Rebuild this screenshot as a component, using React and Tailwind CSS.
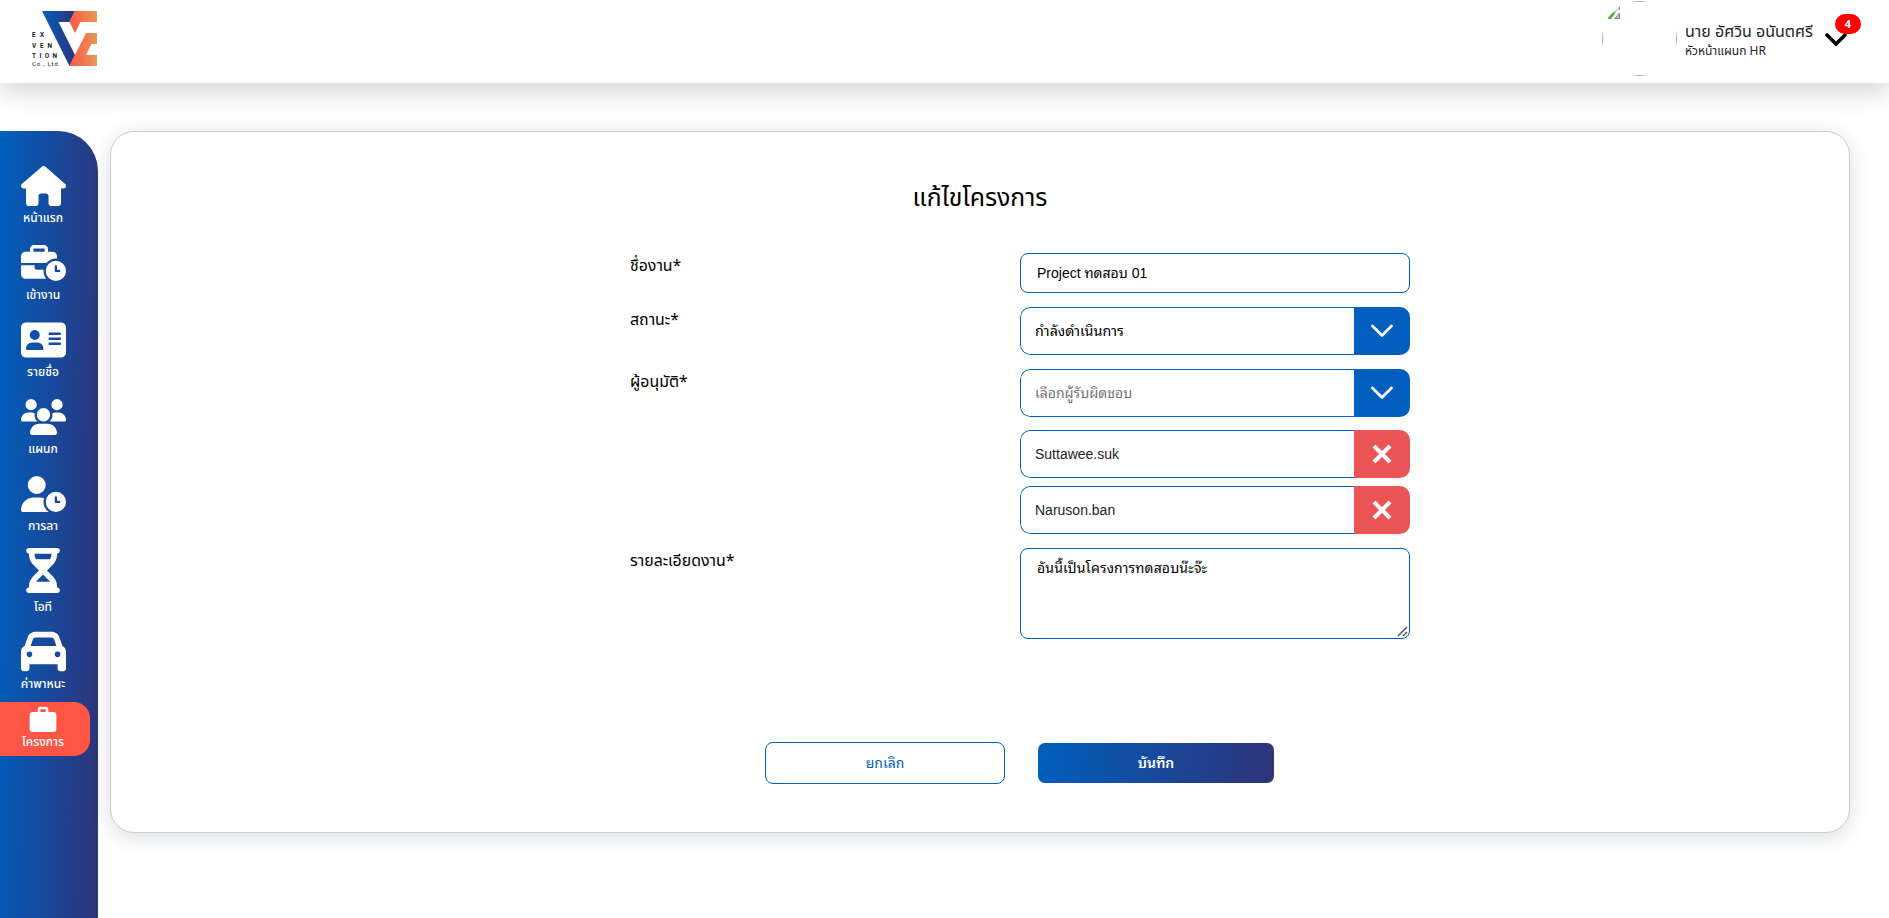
import React from "react";
import {
  FaHouse,
  FaBusinessTime,
  FaAddressCard,
  FaUsers,
  FaUserClock,
  FaHourglassHalf,
  FaCar,
} from "react-icons/fa6";
import { MdWork } from "react-icons/md";

const menu = [
  { label: "หน้าแรก", Icon: FaHouse, icon: "w-[45px] h-[40px]", item: "h-[77px]", gap: "mt-[2px]" },
  { label: "เข้างาน", Icon: FaBusinessTime, icon: "w-[45px] h-[36px]", item: "h-[77px]", gap: "mt-[2px]" },
  { label: "รายชื่อ", Icon: FaAddressCard, icon: "w-[45px] h-[40px]", item: "h-[77px]", gap: "mt-[2px]" },
  { label: "แผนก", Icon: FaUsers, icon: "w-[45px] h-[36px]", item: "h-[77px]", gap: "mt-[2px]" },
  { label: "การลา", Icon: FaUserClock, icon: "w-[45px] h-[36px]", item: "h-[77px]", gap: "mt-[2px]" },
  { label: "โอที", Icon: FaHourglassHalf, icon: "w-[34px] h-[45px]", item: "h-[81px]", gap: "mt-[6px]" },
  { label: "ค่าพาหนะ", Icon: FaCar, icon: "w-[45px] h-[45px]", item: "h-[73px]", gap: "mt-[2px]" },
];

function Logo() {
  return (
    <svg className="h-[60px] w-[68px]" viewBox="30 8 68 60">
      <defs>
        <linearGradient id="lb" x1="0" x2="1">
          <stop offset="0" stopColor="#005fbe" />
          <stop offset="1" stopColor="#2f3479" />
        </linearGradient>
        <linearGradient id="lo" x1="0" x2="1">
          <stop offset="0" stopColor="#ff5545" />
          <stop offset="1" stopColor="#e59a55" />
        </linearGradient>
      </defs>
      <path d="M42 11H75L69.5 22H58.5L75 55L69.5 66Z" fill="url(#lb)" />
      <path d="M75 11H97V22H80.5L75 33L69.5 22Z" fill="url(#lo)" />
      <path d="M86 33H97V44H91.5L86 55H97V66H69.5Z" fill="url(#lo)" />
      <g fill="#222" fontFamily="Roboto, 'Liberation Sans', sans-serif">
        <text x="32" y="37.2" fontSize="6.4" fontWeight="bold" textLength="12">EX</text>
        <text x="32" y="47.5" fontSize="6.4" fontWeight="bold" textLength="20">VEN</text>
        <text x="32" y="57.6" fontSize="6.4" fontWeight="bold" textLength="25">TION</text>
        <text x="32" y="66.3" fontSize="6.2" textLength="28">Co., Ltd.</text>
      </g>
    </svg>
  );
}

function Avatar() {
  return (
    <div className="h-[75px] w-[75px] overflow-hidden rounded-full">
      <div className="h-full w-full border border-[#a8a8a8]">
        <svg className="h-[18px] w-[18px]" viewBox="1603 2 18 18">
          <path d="M1603 5H1615V7L1607 19H1603Z" fill="#c3d5f5" />
          <path d="M1612 7H1619.5V9L1614 14L1607 18Z" fill="#c3d5f5" />
          <path d="M1606 19C1608 15 1612 12 1616 12L1611 19Z" fill="#56ad35" />
          <path d="M1614.500 18.500L1619.500 13V18.500Z" fill="#9fca9a" stroke="#8a8a8a" />
          <path d="M1617.500 6.800H1619.500V10" fill="none" stroke="#8a8a8a" />
        </svg>
      </div>
    </div>
  );
}

function Chevron() {
  return (
    <svg className="h-[14px] w-[24px]" viewBox="0 0 24 14" fill="none" stroke="#fff" strokeWidth="2.8" strokeLinecap="round" strokeLinejoin="round">
      <path d="M2.500 2L12 11.500L21.500 2" />
    </svg>
  );
}

function Cross() {
  return (
    <svg className="h-[20px] w-[20px]" viewBox="0 0 20 20" fill="none" stroke="#fff" strokeWidth="4">
      <path d="M2 2L18 18M18 2L2 18" />
    </svg>
  );
}

function Combo({ text, textClass, danger }) {
  return (
    <div className="flex h-[48px] w-[390px] overflow-hidden rounded-[10px]">
      <div className="flex flex-1 items-center rounded-l-[10px] border border-r-0 border-[#005fbe] pl-[14px]">
        <span className={"whitespace-nowrap " + textClass}>{text}</span>
      </div>
      {danger ? (
        <button className="flex w-[56px] items-center justify-center bg-[#ec5555]"><Cross /></button>
      ) : (
        <button className="flex w-[56px] items-center justify-center bg-[#005fbe] pb-[1px]"><Chevron /></button>
      )}
    </div>
  );
}

function Row({ label, children, className }) {
  return (
    <div className={"flex " + className}>
      <div className="w-[391px] pt-[1px] pl-[1px] text-[15.9px] leading-[24px]">{label}</div>
      <div className="relative font-['Liberation_Sans','Noto_Sans_Thai_Looped','Noto_Sans_Thai',sans-serif]">{children}</div>
    </div>
  );
}

export default function App() {
  return (
    <div className="flex h-[918px] w-full flex-col overflow-hidden bg-white font-['Noto_Sans_Thai','Noto_Sans',sans-serif] text-black">
      <header className="z-10 flex h-[83px] shrink-0 items-start justify-between bg-white shadow-[0_8px_28px_rgba(0,0,0,0.18)]">
        <div className="pt-[8px] pl-[30px]"><Logo /></div>
        <div className="flex pt-[1px] pr-[28px]">
          <Avatar />
          <div className="w-[140px] pt-[19px] pl-[8px] whitespace-nowrap">
            <div className="text-[16px] leading-[24px] text-[#212529]">นาย อัศวิน อนันตศรี</div>
            <div className="-mt-[1px] text-[12px] leading-[16px] text-[#212529]">หัวหน้าแผนก HR</div>
          </div>
          <div className="relative h-[50px] w-[44px]">
            <svg className="absolute top-[30px] left-[8px] h-[16px] w-[22px]" viewBox="0 0 22 16" fill="none" stroke="#000" strokeWidth="3.6" strokeLinecap="round">
              <path d="M2 4L11 13L20 4" />
            </svg>
            <span className="absolute top-[13px] left-[18px] flex h-[20px] w-[26px] items-center justify-center rounded-[10px] bg-[#ff0000] font-['Noto_Sans'] text-[11px] font-bold text-white">4</span>
          </div>
        </div>
      </header>
      <div className="flex flex-1 pt-[48px]">
        <nav className="flex w-[98px] flex-col rounded-tr-[40px] bg-[linear-gradient(91deg,#005fbe_0%,#2f3479_100%)] pt-[32px]">
          {menu.map(({ label, Icon, icon, item, gap }) => (
            <a key={label} className={"flex w-[86px] shrink-0 flex-col items-center text-white " + item}>
              <span className="flex h-[45px] items-center"><Icon className={icon} /></span>
              <span className={"text-[12px] leading-[16px] font-medium whitespace-nowrap " + gap}>{label}</span>
            </a>
          ))}
          <a className="flex h-[54px] w-[90px] shrink-0 flex-col items-center rounded-r-[16px] bg-[#ff5545] pr-[4px] text-white">
            <MdWork className="mt-[2px] h-[32px] w-[32px]" />
            <span className="-mt-[2px] text-[12px] leading-[16px] font-medium whitespace-nowrap">โครงการ</span>
          </a>
        </nav>
        <main className="ml-[12px] h-[702px] w-[1740px] rounded-[24px] border border-[#cccdd0] bg-white shadow-[0_4px_20px_rgba(47,72,100,0.18)]">
          <h1 className="pt-[49px] text-center text-[24.8px] leading-[36px]">แก้ไขโครงการ</h1>
          <div className="ml-[518px] pt-[36px]">
            <Row label="ชื่องาน*" className="h-[54px]">
              <div className="flex h-[40px] w-[390px] items-center rounded-[8px] border border-[#005fbe] pl-[16px] text-[14px]">Project ทดสอบ 01</div>
            </Row>
            <Row label="สถานะ*" className="h-[62px]">
              <Combo text="กำลังดำเนินการ" textClass="pt-[1px] text-[14.3px]" />
            </Row>
            <Row label="ผู้อนุมัติ*" className="h-[179px]">
              <div className="flex flex-col">
                <Combo text="เลือกผู้รับผิดชอบ" textClass="pt-[1px] text-[14px] text-[#757575]" />
                <div className="mt-[13px] flex flex-col gap-[8px]">
                  <Combo danger text="Suttawee.suk" textClass="text-[14px] text-[#212529]" />
                  <Combo danger text="Naruson.ban" textClass="text-[14px] text-[#212529]" />
                </div>
              </div>
            </Row>
            <Row label="รายละเอียดงาน*" className="h-[194px]">
              <textarea readOnly className="block h-[91px] w-[390px] resize-none rounded-[8px] border border-[#005fbe] px-[16px] pt-[9px] text-[14px] leading-[20px] tracking-[0.12px] outline-none" value="อันนี้เป็นโครงการทดสอบน๊ะจ๊ะ" />
              <svg className="absolute right-[2px] bottom-[105px] h-[11px] w-[11px]" viewBox="0 0 11 11" fill="none" stroke="#555" strokeWidth="1.5">
                <path d="M1 10L10 1M6 10L10 6" />
              </svg>
            </Row>
          </div>
          <div className="flex items-center pl-[654px] font-['Liberation_Sans','Noto_Sans_Thai_Looped','Noto_Sans_Thai',sans-serif] text-[14px]">
            <button className="h-[42px] w-[240px] rounded-[8px] border border-[#005fbe] text-[#005fbe]">ยกเลิก</button>
            <button className="ml-[33px] h-[40px] w-[236px] rounded-[7px] bg-[linear-gradient(100deg,#005fbe_0%,#2f3479_100%)] font-semibold text-white">บันทึก</button>
          </div>
        </main>
      </div>
    </div>
  );
}
